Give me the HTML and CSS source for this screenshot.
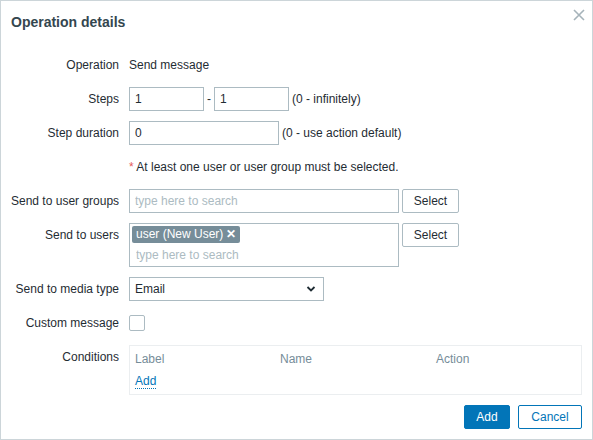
FILE: index.html
```html
<!DOCTYPE html>
<html>
<head>
<meta charset="utf-8">
<link rel="stylesheet" href="styles.css">
</head>
<body>
<div class="dialog">
  <div class="header">
    <h4 class="title">Operation details</h4>
    <button class="close" type="button" aria-label="Close">
      <svg width="12" height="12" viewBox="0 0 12 12"><path d="M1 1L11 11M11 1L1 11" stroke="#a6b3ba" stroke-width="1.6" fill="none"/></svg>
    </button>
  </div>
  <div class="form">
    <label class="lbl">Operation</label>
    <div class="val"><span class="text">Send message</span></div>

    <label class="lbl">Steps</label>
    <div class="val">
      <input class="inp w75" type="text" value="1">
      <span class="dash">-</span>
      <input class="inp w75" type="text" value="1">
      <span class="hint">(0 - infinitely)</span>
    </div>

    <label class="lbl">Step duration</label>
    <div class="val">
      <input class="inp w150" type="text" value="0">
      <span class="hint">(0 - use action default)</span>
    </div>

    <div class="lbl"></div>
    <div class="val"><span class="text"><span class="star">*</span> At least one user or user group must be selected.</span></div>

    <label class="lbl">Send to user groups</label>
    <div class="val">
      <input class="inp w270" type="text" placeholder="type here to search">
      <button class="btn-alt" type="button">Select</button>
    </div>

    <label class="lbl">Send to users</label>
    <div class="val top">
      <div class="multi">
        <div class="tags"><span class="tag">user (New User) <span class="tagx">✕</span></span></div>
        <input class="multi-inp" type="text" placeholder="type here to search">
      </div>
      <button class="btn-alt" type="button">Select</button>
    </div>

    <label class="lbl">Send to media type</label>
    <div class="val">
      <div class="select">
        <span>Email</span>
        <svg width="10" height="6" viewBox="0 0 10 6"><path d="M1.5 1L5 4.5L8.5 1" stroke="#1f2c33" stroke-width="1.8" fill="none"/></svg>
      </div>
    </div>

    <label class="lbl">Custom message</label>
    <div class="val"><span class="checkbox"></span></div>

    <label class="lbl">Conditions</label>
    <div class="val top">
      <div class="cond">
        <div class="cond-head">
          <span class="c1">Label</span>
          <span class="c2">Name</span>
          <span class="c3">Action</span>
        </div>
        <div class="cond-row"><a class="link" href="#">Add</a></div>
      </div>
    </div>
  </div>
  <div class="footer">
    <button class="btn-main" type="button">Add</button>
    <button class="btn-cancel" type="button">Cancel</button>
  </div>
</div>
</body>
</html>
```

FILE: styles.css
```css
* { box-sizing: border-box; }
html, body { margin: 0; padding: 0; background: #fff; }
body {
  font-family: "Liberation Sans", Arial, sans-serif;
  font-size: 12px;
  color: #1f2c33;
}
.dialog {
  width: 593px;
  height: 440px;
  border: 1px solid #ccd5d9;
  background: #fff;
  padding: 0 10px;
  position: relative;
}
.header {
  height: 52px;
  padding-top: 12px;
}
.title {
  margin: 0;
  font-size: 14px;
  font-weight: bold;
  line-height: 18px;
  color: #34464f;
}
.close {
  position: absolute;
  top: 6px;
  right: 5px;
  width: 16px;
  height: 16px;
  padding: 2px;
  border: 0;
  background: none;
  display: flex;
  align-items: center;
  justify-content: center;
}
.form {
  display: grid;
  grid-template-columns: 108px 1fr;
  column-gap: 10px;
  row-gap: 10px;
}
.lbl {
  text-align: right;
  line-height: 24px;
  min-height: 24px;
  white-space: nowrap;
}
.val {
  display: flex;
  align-items: center;
  min-height: 24px;
}
.val.top { align-items: flex-start; }
.text { line-height: 24px; }
.star { color: #e45959; }
.inp {
  height: 24px;
  border: 1px solid #acbbc2;
  padding: 0 5px;
  font: inherit;
  color: #1f2c33;
  background: #fff;
  outline: none;
}
.inp::placeholder, .multi-inp::placeholder { color: #acbbc2; }
.w75 { width: 75px; }
.w150 { width: 150px; }
.w270 { width: 270px; }
.dash { margin: 0 3px 0 3px; }
.hint { margin-left: 3px; }
.btn-alt {
  margin-left: 3px;
  width: 57px;
  height: 24px;
  border: 1px solid #acbbc2;
  border-radius: 2px;
  background: #fff;
  color: #1f2c33;
  font: inherit;
  padding: 0;
}
.multi {
  width: 270px;
  height: 44px;
  border: 1px solid #acbbc2;
  padding: 2px 2px 0 2px;
}
.tags { display: flex; height: 18px; }
.tag {
  display: inline-flex;
  align-items: center;
  height: 17px;
  padding: 0 4px;
  background: #768d99;
  color: #fff;
  border-radius: 2px;
  line-height: 17px;
  white-space: nowrap;
}
.tagx { margin-left: 3px; font-size: 12px; font-weight: bold; }
.multi-inp {
  display: block;
  border: 0;
  outline: none;
  width: 100%;
  height: 20px;
  padding: 0 4px;
  margin-top: 1px;
  font: inherit;
  color: #1f2c33;
  background: transparent;
}
.select {
  width: 195px;
  height: 24px;
  border: 1px solid #acbbc2;
  padding: 0 7px 0 5px;
  display: flex;
  align-items: center;
  justify-content: space-between;
}
.checkbox {
  width: 16px;
  height: 16px;
  border: 1px solid #acbbc2;
  border-radius: 2px;
  background: #fff;
  display: block;
}
.cond {
  width: 100%;
  height: 50px;
  border: 1px solid #ebeef0;
  padding: 4px 5px 0 5px;
}
.cond-head {
  display: flex;
  line-height: 18px;
  color: #768d99;
}
.c1 { width: 145px; }
.c2 { width: 156px; }
.cond-row { line-height: 18px; margin-top: 4px; }
.link {
  color: #0275b8;
  text-decoration: none;
  border-bottom: 1px dotted #0275b8;
}
.footer {
  display: flex;
  justify-content: flex-end;
  gap: 8px;
  margin-top: 10px;
}
.btn-main, .btn-cancel {
  height: 24px;
  border: 1px solid #0275b8;
  border-radius: 2px;
  font: inherit;
  padding: 0 11px;
}
.btn-main { background: #0275b8; color: #fff; width: 46px; }
.btn-cancel { background: #fff; color: #0275b8; width: 64px; }
```
